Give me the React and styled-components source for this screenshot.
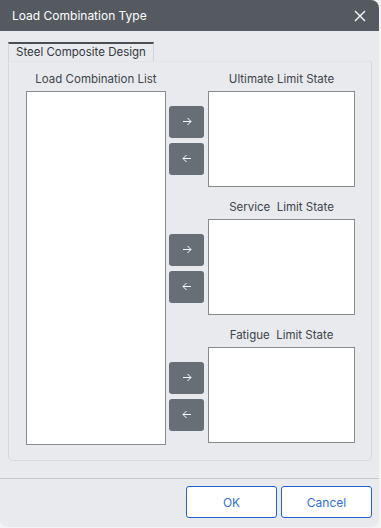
import styled, { createGlobalStyle } from "styled-components";

const GlobalStyle = createGlobalStyle`
  html, body {
    margin: 0;
    padding: 0;
    background: #f4f4f5;
  }
  body {
    font-family: Inter, "Noto Sans", "Liberation Sans", sans-serif;
  }
`;

const Page = styled.div`
  display: flex;
  width: 381px;
  height: 528px;
`;

const Dialog = styled.div`
  width: 379px;
  height: 527px;
  background: #e9eaed;
  border-radius: 0 8px 8px 8px;
  overflow: hidden;
  display: flex;
  flex-direction: column;
`;

const TitleBar = styled.div`
  height: 31px;
  flex-shrink: 0;
  background: #555a61;
  color: #ffffff;
  display: flex;
  align-items: center;
  justify-content: space-between;
  padding: 0 12px 0 12px;
  font-size: 12px;
`;

const CloseButton = styled.div`
  width: 14px;
  height: 14px;
  display: flex;
  align-items: center;
  justify-content: center;
`;

const Body = styled.div`
  padding: 11px 7px 0 8px;
  flex: 1;
  display: flex;
  flex-direction: column;
`;

const TabStrip = styled.div`
  display: flex;
`;

const Tab = styled.div`
  height: 17px;
  padding: 0 7px;
  border-top: 2px solid #4a4e55;
  border-left: 1px solid #d2d4d8;
  border-right: 1px solid #d2d4d8;
  font-size: 11.5px;
  line-height: 17px;
  color: #333840;
`;

const Panel = styled.div`
  height: 400px;
  border: 1px solid #d6d8dc;
  border-top-color: #e2e3e6;
  border-radius: 0 0 5px 5px;
  padding: 11px 16px 0 17px;
  display: flex;
  gap: 3px;
  box-sizing: border-box;
`;

const LeftColumn = styled.div`
  width: 140px;
  display: flex;
  flex-direction: column;
`;

const Label = styled.div`
  height: 12px;
  margin-bottom: 6px;
  font-size: 11.5px;
  line-height: 12px;
  color: #40444b;
  text-align: center;
  white-space: pre;
`;

const ListBox = styled.div`
  height: ${(p) => p.$height}px;
  background: #ffffff;
  border: 1px solid #868a91;
  box-sizing: border-box;
`;

const RightColumn = styled.div`
  display: flex;
  flex-direction: column;
  gap: 14px;
`;

const Group = styled.div`
  display: grid;
  grid-template-columns: 35px 147px;
  column-gap: 4px;
`;

const GroupLabel = styled(Label)`
  grid-column: 2;
`;

const ArrowStack = styled.div`
  grid-column: 1;
  display: flex;
  flex-direction: column;
  justify-content: center;
  gap: 5px;
  padding-top: 2px;
`;

const ArrowButton = styled.div`
  height: 32px;
  background: #686e76;
  border-radius: 3px;
  display: flex;
  align-items: center;
  justify-content: center;
`;

const Footer = styled.div`
  margin-top: auto;
  border-top: 1px solid #c6c8cc;
  padding: 7px 7px 9px;
  display: flex;
  justify-content: flex-end;
  gap: 4px;
`;

const DialogButton = styled.button`
  width: 91px;
  height: 32px;
  background: #ffffff;
  border: 1px solid #2261cf;
  border-radius: 3px;
  color: #2f6edb;
  font-family: inherit;
  font-size: 12px;
  padding: 0;
`;

const Arrow = ({ dir }) => (
  <svg width="10" height="9" viewBox="0 0 10 9" fill="none">
    {dir === "right" ? (
      <path d="M1 4.5H9M5.5 1L9 4.5L5.5 8" stroke="#ffffff" strokeWidth="1" />
    ) : (
      <path d="M9 4.5H1M4.5 1L1 4.5L4.5 8" stroke="#ffffff" strokeWidth="1" />
    )}
  </svg>
);

const groups = ["Ultimate Limit State", "Service  Limit State", "Fatigue  Limit State"];

export default function App() {
  return (
    <Page>
      <GlobalStyle />
      <Dialog>
        <TitleBar>
          <span>Load Combination Type</span>
          <CloseButton>
            <svg width="12" height="12" viewBox="0 0 12 12">
              <path d="M1 1L11 11M11 1L1 11" stroke="#ffffff" strokeWidth="1.3" />
            </svg>
          </CloseButton>
        </TitleBar>
        <Body>
          <TabStrip>
            <Tab>Steel Composite Design</Tab>
          </TabStrip>
          <Panel>
            <LeftColumn>
              <Label>Load Combination List</Label>
              <ListBox $height={354} />
            </LeftColumn>
            <RightColumn>
              {groups.map((g) => (
                <Group key={g}>
                  <GroupLabel>{g}</GroupLabel>
                  <ArrowStack>
                    <ArrowButton>
                      <Arrow dir="right" />
                    </ArrowButton>
                    <ArrowButton>
                      <Arrow dir="left" />
                    </ArrowButton>
                  </ArrowStack>
                  <ListBox $height={96} />
                </Group>
              ))}
            </RightColumn>
          </Panel>
        </Body>
        <Footer>
          <DialogButton>OK</DialogButton>
          <DialogButton>Cancel</DialogButton>
        </Footer>
      </Dialog>
    </Page>
  );
}
